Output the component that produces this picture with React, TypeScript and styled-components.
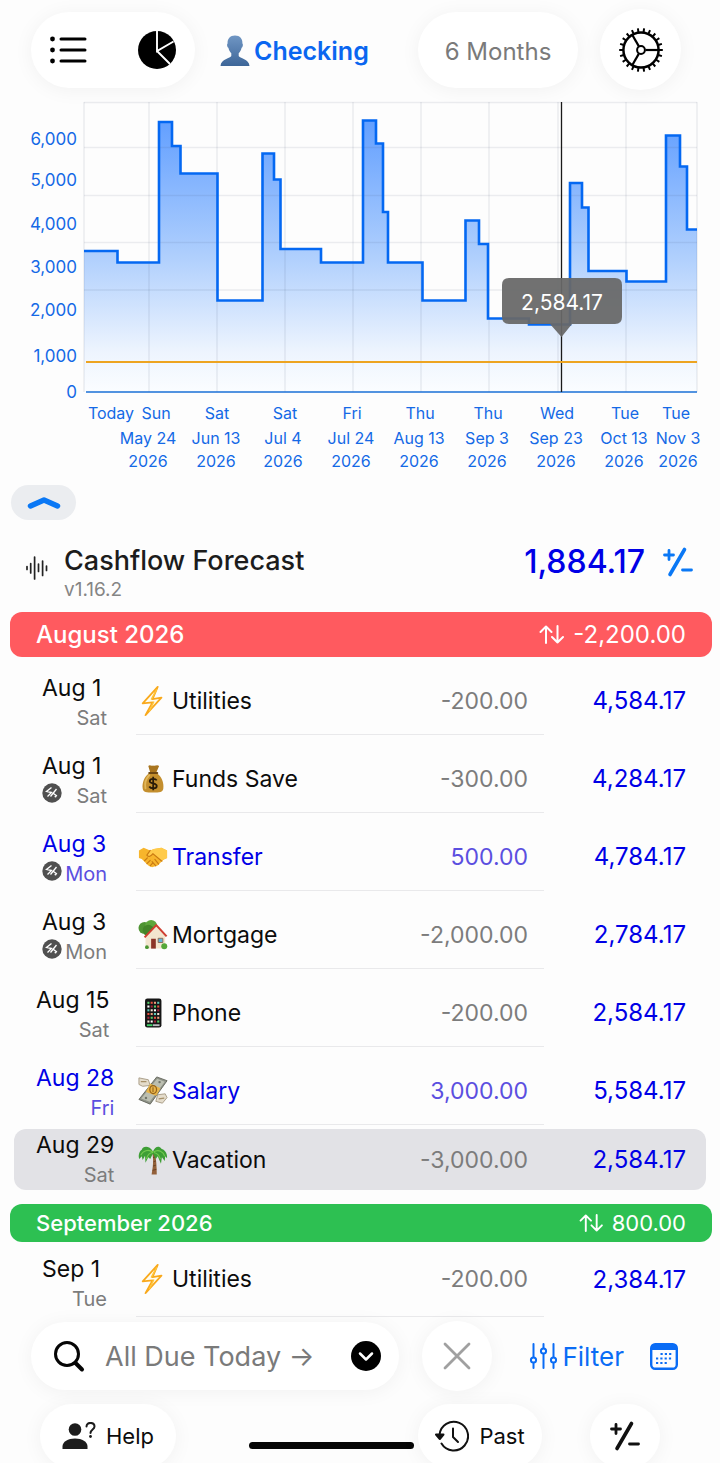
import React, { useState } from "react";
import styled, { createGlobalStyle } from "styled-components";

const blue = "#0a6cf5";
const ink = "#0000e6";

const GlobalStyle = createGlobalStyle`
  * { box-sizing: border-box; }
  body { margin: 0; background: #fdfdfd; color: #0c0c0c; font-family: Inter, "Liberation Sans", sans-serif; }
  button, input { font: inherit; color: inherit; border: 0; background: none; padding: 0; margin: 0; }
  button { cursor: pointer; }
  svg { display: block; flex: none; }
`;

const Screen = styled.main`
  width: 100%;
  overflow: hidden;
`;

const TopBar = styled.header`
  display: flex;
  align-items: center;
  height: 96px;
  padding: 6px 39px 3px 31px;
`;

const Surface = styled.div`
  display: flex;
  align-items: center;
  justify-content: center;
  flex: none;
  background: #fff;
  border-radius: 41px;
  box-shadow: 0 2px 20px rgba(0, 0, 0, 0.05);
`;

const ViewSwitch = styled(Surface)`
  width: 164px;
  height: 76px;
  justify-content: space-between;
  padding: 0 19px 0 18px;
`;

const IconButton = styled.button`
  display: flex;
  align-items: center;
  justify-content: center;
`;

const AccountButton = styled.button`
  display: flex;
  align-items: center;
  gap: 4px;
  margin-left: 25px;
  margin-right: auto;
  padding-top: 3px;
  color: #0a66f0;
  font-size: 25px;
  font-weight: 600;
`;

const PeriodButton = styled(Surface).attrs({ as: "button" })`
  width: 160px;
  height: 76px;
  margin-right: 22px;
  padding-top: 3px;
  color: #7a7a7a;
  font-size: 24px;
`;

const RoundButton = styled(Surface).attrs({ as: "button" })<{ $size: number }>`
  width: ${(p) => p.$size}px;
  height: ${(p) => p.$size}px;
`;

const Chart = styled.svg`
  width: 100%;
  height: auto;
  font-family: Inter, "Liberation Sans", sans-serif;
`;

const CollapseButton = styled.button`
  display: flex;
  align-items: center;
  justify-content: center;
  width: 65px;
  height: 35px;
  margin: 9px 0 0 11px;
  border-radius: 18px;
  background: #ebedf0;
`;

const Summary = styled.section`
  display: flex;
  align-items: flex-start;
  padding: 24px 27px 10px 25px;
`;

const WaveBox = styled.span`
  padding-top: 11px;
  margin-right: 15px;
`;

const AppTitle = styled.h1`
  margin: 0;
  font-size: 27px;
  line-height: 34px;
  font-weight: 500;
  color: #1c1c1c;
`;

const Version = styled.p`
  margin: 0;
  font-size: 19px;
  line-height: 24px;
  color: #858585;
`;

const Total = styled.div`
  display: flex;
  align-items: center;
  gap: 18px;
  margin-left: auto;
  font-size: 32px;
  line-height: 36px;
  font-weight: 500;
  color: ${ink};
`;

const Ledger = styled.table`
  display: block;
  font-size: 23px;
`;

const Group = styled.tbody`
  display: block;
`;

const MonthRow = styled.tr<{ $color: string; $compact?: boolean }>`
  display: flex;
  align-items: center;
  justify-content: space-between;
  height: ${(p) => (p.$compact ? 38 : 45)}px;
  margin: 0 8px 0 10px;
  padding: 0 26px;
  border-radius: 12px;
  background: ${(p) => p.$color};
  color: #fff;
  font-size: ${(p) => (p.$compact ? 22 : 24)}px;
`;

const MonthName = styled.th`
  padding: 0;
  font-weight: 500;
`;

const MonthNet = styled.td`
  display: flex;
  align-items: center;
  gap: 9px;
  padding: 0;
`;

type RowKind = "regular" | "selected" | "compact";
const rowHeight = { regular: 78, selected: 61, compact: 75 };
const rowTop = { regular: 10, selected: 0, compact: 0 };
const dateTop = { regular: 15, selected: 1, compact: 9 };

const EntryRow = styled.tr<{ $kind: RowKind }>`
  --inset: ${(p) => (p.$kind === "selected" ? 14 : 0)}px;
  --top: ${(p) => rowTop[p.$kind]}px;
  --date-top: ${(p) => dateTop[p.$kind]}px;
  --rule: ${(p) => (p.$kind === "selected" ? "transparent" : "#e9e9eb")};
  display: grid;
  grid-template-columns: calc(136px - var(--inset)) 1fr 140px calc(176px - var(--inset));
  height: ${(p) => rowHeight[p.$kind]}px;
  margin: ${(p) => (p.$kind === "selected" ? "4px 14px 14px" : "0")};
  border-radius: 12px;
  background: ${(p) => (p.$kind === "selected" ? "#e2e2e6" : "transparent")};
`;

const Cell = styled.td`
  display: flex;
  align-items: center;
  padding: var(--top) 0 0;
  border-bottom: 1px solid transparent;
`;

const DateCell = styled(Cell)<{ $wide: boolean }>`
  padding-top: var(--date-top);
  padding-left: calc(${(p) => (p.$wide ? 36 : 42)}px - var(--inset));
`;

const DateBlock = styled.div`
  min-width: 65px;
`;

const Day = styled.div<{ $income?: boolean }>`
  font-size: 23px;
  line-height: 30px;
  white-space: nowrap;
  color: ${(p) => (p.$income ? ink : "#0c0c0c")};
`;

const Weekday = styled.div<{ $income?: boolean }>`
  display: flex;
  justify-content: space-between;
  font-size: 20px;
  line-height: 30px;
  color: ${(p) => (p.$income ? "#5b4fe0" : "#7c7c7c")};

  svg { margin-top: 2px; }
  span { margin-left: auto; }
`;

const NameCell = styled(Cell)<{ $income?: boolean }>`
  gap: 4px;
  padding-left: 2px;
  border-bottom-color: var(--rule);
  color: ${(p) => (p.$income ? ink : "#0c0c0c")};
`;

const AmountCell = styled(Cell)<{ $income?: boolean }>`
  justify-content: flex-end;
  padding-right: 16px;
  border-bottom-color: var(--rule);
  color: ${(p) => (p.$income ? "#5b4fe0" : "#7c7c7c")};
`;

const BalanceCell = styled(Cell)`
  justify-content: flex-end;
  padding-right: calc(34px - var(--inset));
  font-size: 24px;
  color: ${ink};
`;

const ActionBar = styled.div`
  display: flex;
  align-items: center;
  padding: 4px 42px 0 31px;
`;

const SearchField = styled(Surface)`
  flex: 1 1 0;
  min-width: 0;
  height: 68px;
  padding: 0 18px 0 21px;
  margin-right: 23px;

  input {
    flex: 1 1 0;
    min-width: 0;
    margin-left: 19px;
    outline: 0;
    font-size: 27px;
  }
  input::placeholder { color: #7a7a7a; opacity: 1; }
`;

const FilterButton = styled.button`
  display: flex;
  align-items: center;
  gap: 5px;
  margin: 0 26px 0 37px;
  color: ${blue};
  font-size: 26px;
`;

const BottomNav = styled.nav`
  display: flex;
  align-items: flex-start;
  height: 72px;
  padding: 13px 60px 0 40px;
`;

const NavButton = styled(Surface).attrs({ as: "button" })<{ $width: number }>`
  width: ${(p) => p.$width}px;
  height: 64px;
  gap: 10px;
  font-size: 22px;
`;

const HomeIndicator = styled.span`
  width: 165px;
  height: 7px;
  margin: 38px 4px 0 auto;
  border-radius: 4px;
  background: #050505;
`;

const PlusButton = styled(RoundButton)`
  height: 64px;
  margin-left: 48px;
`;

const ListIcon = () => (
  <svg width="38" height="30" viewBox="0 0 38 30" stroke="#000" strokeWidth="3" strokeLinecap="round">
    {[4, 15, 26].map((y) => (
      <g key={y}>
        <circle cx="3.5" cy={y} r="2.4" fill="#000" stroke="none" />
        <path d={`M12 ${y}H36`} />
      </g>
    ))}
  </svg>
);

const PieIcon = () => (
  <svg width="38" height="38" viewBox="0 0 38 38">
    <circle cx="19" cy="19" r="19" />
    <path d="M19 0V20L35.5 10.5M19 20L32 33" fill="none" stroke="#fff" strokeWidth="1.9" />
  </svg>
);

const PersonIcon = () => (
  <svg width="30" height="32" viewBox="0 0 30 32">
    <defs>
      <linearGradient id="person" x1="0" y1="0" x2="0" y2="1">
        <stop offset="0" stopColor="#7096c4" />
        <stop offset="1" stopColor="#3d6698" />
      </linearGradient>
    </defs>
    <path
      fill="url(#person)"
      d="M15 0.5C10 .5 7.3 4 7.6 8.5c-.8.4-.7 3.500.8 4.300.5 2.500 1.700 4.300 2.900 5.500v2.700C10.500 23.500 1 23.500.500 31h29c-.5-7.500-10-7.500-10.800-10v-2.700c1.200-1.200 2.400-3 2.900-5.500 1.500-.8 1.600-3.900.8-4.300C22.700 4 20 .5 15 .5Z"
    />
  </svg>
);

const GearIcon = () => (
  <svg width="44" height="44" viewBox="-22 -22 44 44" fill="none" stroke="#000">
    <circle r="17.6" strokeWidth="2.5" />
    {Array.from({ length: 22 }, (_, i) => (
      <path key={i} d="M18 0H21.800" strokeWidth="2" transform={`rotate(${(i * 360) / 22})`} />
    ))}
    <circle r="3.900" strokeWidth="2" />
    {[0, 120, 240].map((a) => (
      <path key={a} d="M4.500 0H17" strokeWidth="2.200" transform={`rotate(${a})`} />
    ))}
  </svg>
);

const PlusMinusIcon = ({ color }: { color: string }) => (
  <svg width="30" height="30" viewBox="0 0 30 30" fill="none" stroke={color} strokeLinecap="round">
    <path d="M21.500 2.500L7 27.500" strokeWidth="3.600" />
    <path d="M1.500 8H10.500M6 3.500V12.500M19.500 23H28.500" strokeWidth="2.800" />
  </svg>
);

const WaveIcon = () => (
  <svg width="24" height="26" viewBox="0 0 24 26" stroke="#222" strokeWidth="1.700" strokeLinecap="round">
    <path d="M2 11.500V14.500M5.700 8.500V18M9.600 2V24M13.500 9V16.500M17.600 6V20.500M21.500 11V15.500" />
  </svg>
);

const SwapIcon = ({ size }: { size: number }) => (
  <svg width={size} height={size - 6} viewBox="0 0 25 19" fill="none" stroke="#fff" strokeWidth="2" strokeLinecap="round" strokeLinejoin="round">
    <path d="M7 18V1.500M1.500 7L7 1.500L12.500 7M18.500 1V17.500M13 12L18.500 17.500L24 12" />
  </svg>
);

const AutoIcon = () => (
  <svg width="20" height="20" viewBox="0 0 20 20" role="img" aria-label="Automatic">
    <circle cx="10" cy="10" r="9.700" fill="#505050" />
    <path d="M9.500 4.500L4.500 8.500L9.500 9.500L5.500 13.500M14.500 6L8.500 13.500M11.500 10.500L15 13" fill="none" stroke="#fff" strokeWidth="1.300" />
    <circle cx="13.500" cy="13.500" r="1" fill="#fff" />
  </svg>
);

const glyphs: Record<string, React.ReactNode> = {
  bolt: (
    <>
      <path d="M21 1L5 18.500L15.500 17.500L8 31L25 12.500L15.500 14Z" fill="#fffdf0" stroke="#f9a91c" strokeWidth="1.900" strokeLinejoin="round" />
      <path d="M20 3.500L14 14.500M12 27L17 16.500" stroke="#ffc53a" strokeWidth="1.500" />
    </>
  ),
  bag: (
    <>
      <path d="M11 2C13 0 14 3 16 1.500C18 3 20 0 22.500 2L19.500 9H13Z" fill="#a9751f" />
      <path d="M12 9.500C7 13 4 20 5 26C5.500 30 9 30.500 16 30.500S26.500 30 27 26C28 20 25 13 20 9.500Z" fill="#c48f2e" />
      <path d="M12 12C8 16 7 21 8 26" stroke="#e2b75a" strokeWidth="2" fill="none" strokeLinecap="round" />
      <path d="M12 9.500H20.500" stroke="#6d4713" strokeWidth="2.200" strokeLinecap="round" />
      <path d="M20 17.500C18.500 15 12.500 15.300 12.500 18.300C12.500 21.500 20 20 20 23.500C20 26.800 13.500 26.800 12 24M16.200 13.700V28" stroke="#2b1c08" strokeWidth="1.900" fill="none" />
    </>
  ),
  hands: (
    <>
      <path d="M1 9L6 6L13 9L17 7.500L25 6L31 9V17L27 19L21 25L15 27L11 25L4 18L1 17Z" fill="#f7b52c" />
      <path d="M13 9L9.500 14C11 16.500 14 15 16 12.500L25.500 20.500L27 19L31 17V9L25 6L17 7.500Z" fill="#ffcb4a" />
      <path d="M13 9L9.500 14C11 16.500 14 15 16 12.500L25.500 20.500M7 20L10 17M9.500 23L13 19.500M13 25.500L16 22M18 18.500L22 23.500M15 21L19 25.500" stroke="#c97a12" strokeWidth="1.200" fill="none" strokeLinecap="round" />
    </>
  ),
  house: (
    <>
      <path d="M9 16H12V30H9Z" fill="#7b4a25" />
      <circle cx="7" cy="8.500" r="6.500" fill="#4e9432" />
      <circle cx="14" cy="6.500" r="6.500" fill="#5da63b" />
      <circle cx="11" cy="11" r="6" fill="#438529" />
      <path d="M8 17L20 6L29 17V30.500H8Z" fill="#f3e6cf" />
      <path d="M7 18.500L19.500 5.500L30.500 17.500" stroke="#cf3f31" strokeWidth="2.200" fill="none" strokeLinejoin="round" />
      <path d="M14 20H19V30.500H14Z" fill="#8c3427" />
      <path d="M21.500 19.500H26.500V24H21.500Z" fill="#63b4da" stroke="#8a6a55" strokeWidth="1" />
      <circle cx="28" cy="28" r="3.200" fill="#55a83a" />
      <circle cx="9.500" cy="29" r="2" fill="#4a9632" />
    </>
  ),
  phone: (
    <>
      <rect x="7.500" y="0.500" width="17.500" height="31" rx="2.500" fill="#161616" />
      {[4, 8, 12, 16, 20, 24].map((y, r) =>
        [10, 13.500, 17, 20.500].map((x, c) => (
          <rect key={`${x}-${y}`} x={x} y={y} width="2.200" height="2.200" fill={["#58d06a", "#f2e3d3", "#e8523f", "#fff", "#ef9d7c", "#a3233a", "#5fc7b7"][(r * 3 + c * 2) % 7]} />
        ))
      )}
      <rect x="9.500" y="28" width="6" height="2" fill="#3ecf66" />
      <rect x="16" y="28" width="7" height="2" fill="#b9bcc0" />
    </>
  ),
  cash: (
    <>
      <path d="M1 2L11 4L13 10L5 11L1 9ZM31 23L26 29L19 27L21 20L29 19Z" fill="#e4dccb" stroke="#a89c86" strokeWidth="1" />
      <path d="M3 6H9M22 24.500L28 23.500" stroke="#a58f68" strokeWidth="1.300" />
      <path d="M20 1L31 5L13 30L1 25Z" fill="#8f9388" stroke="#66695f" strokeWidth="1" />
      <path d="M20.500 3L28.500 6L12.500 27.500L3.500 24Z" fill="#bcbfb1" />
      <path d="M13 8L24 13L19.500 21L8.500 17Z" fill="#e8b54a" />
      <ellipse cx="16.200" cy="14.500" rx="3.600" ry="4.300" fill="none" stroke="#94621a" strokeWidth="1.300" />
      <path d="M16 12V17" stroke="#94621a" strokeWidth="1.200" />
      <circle cx="23" cy="6.500" r="1.300" fill="#72766b" />
      <circle cx="8.500" cy="23.500" r="1.300" fill="#72766b" />
    </>
  ),
  palm: (
    <>
      <path d="M15 8C17 15 16 24 14.500 31.500H20C20 24 19.500 15 18 8Z" fill="#93603a" />
      <path d="M16 13.500L18.500 12.500M16.500 18L19 17M16 22.500L19 21.500M15.500 27L19.500 26" stroke="#6b4023" strokeWidth="1" />
      <path d="M16 7C12 0 5 1 4 5C1 7 0 12 1.500 15L4 12L5 16L7.500 11.500L8 19L11 13L13 15L16 9L19 15L21 12L24.500 20L25.500 13L28.500 17L29 12L31 14C31.500 8 28 5 25 4C22 0 18 2 16 7Z" fill="#3d9e35" />
      <path d="M16 7.500C11 4 5 6 3 11M16.500 7.500C22 4 27 7 28.500 12M16 8C12 8 10 11 9 15M17 8C21 9 23 12 24 15" stroke="#72c94e" strokeWidth="1.200" fill="none" />
    </>
  ),
};

const Glyph = ({ name }: { name: string }) => (
  <svg width="30" height="30" viewBox="0 0 32 32" aria-hidden="true">
    {glyphs[name]}
  </svg>
);

const yTicks: [string, number][] = [["6,000", 139], ["5,000", 180], ["4,000", 224], ["3,000", 267], ["2,000", 310], ["1,000", 356], ["0", 392]];
const xTicks: [string, number, string, string, number][] = [
  ["Sun", 156, "May 24", "2026", 148],
  ["Sat", 217, "Jun 13", "2026", 216],
  ["Sat", 285, "Jul 4", "2026", 283],
  ["Fri", 352, "Jul 24", "2026", 351],
  ["Thu", 420, "Aug 13", "2026", 419],
  ["Thu", 488, "Sep 3", "2026", 487],
  ["Wed", 557, "Sep 23", "2026", 556],
  ["Tue", 625, "Oct 13", "2026", 624],
  ["Tue", 676, "Nov 3", "2026", 678],
];
const balanceLine =
  "M84 251H117.500V262.500H159V122H172V146H180.500V173.500H217.500V300.500H262.500V153.500H274V179.500H280.500V249H321V262.500H363V120.500H376V143.500H383V212H388V262.500H422.500V300.500H465.500V220.500H479V244H488V318.500H529V324.500H570V183H582V207.500H588.500V271H626.500V281.500H666V135.500H680V166.500H687V229.500H697";

const BalanceChart = () => (
  <Chart viewBox="0 96 720 380" role="img" aria-label="Balance forecast">
    <defs>
      <linearGradient id="area" gradientUnits="userSpaceOnUse" x1="0" y1="120" x2="0" y2="392">
        <stop offset="0" stopColor="#629fff" />
        <stop offset="0.500" stopColor="#afcffd" />
        <stop offset="0.850" stopColor="#edf4fe" />
        <stop offset="1" stopColor="#fbfdff" />
      </linearGradient>
    </defs>
    <path d={`${balanceLine}V392H84Z`} fill="url(#area)" />
    <g stroke="#3c4660" strokeOpacity="0.090" strokeWidth="1.500">
      {[102.500, 147.500, 195.500, 242.500, 290].map((y) => (
        <path key={y} d={`M84 ${y}H697`} />
      ))}
      {[84, 149, 217, 285, 353, 421, 489, 558, 626, 697].map((x) => (
        <path key={x} d={`M${x} 102V392`} />
      ))}
    </g>
    <path d={balanceLine} fill="none" stroke="#0468f2" strokeWidth="2.600" />
    <path d="M86 392H697" stroke="#1a6fd6" strokeWidth="1.600" />
    <path d="M561.500 102V392" stroke="#1a1a1a" strokeWidth="1.300" />
    <path d="M86 362H697" stroke="#eda421" strokeWidth="2.200" />
    <path
      d="M509 278H615Q622 278 622 285V317Q622 324 615 324H572L561.500 337L550 324H509Q502 324 502 317V285Q502 278 509 278Z"
      fill="#686868"
      fillOpacity="0.940"
    />
    <text x="562" y="310" fontSize="21" fill="#fff" textAnchor="middle">2,584.17</text>
    <g fontSize="17" fill="#1469e6" textAnchor="end">
      {yTicks.map(([label, y]) => (
        <text key={label} x="77" y={y + 6}>{label}</text>
      ))}
    </g>
    <g fontSize="16" fill="#1469e6" textAnchor="middle">
      <text x="111" y="419">Today</text>
      {xTicks.map(([day, dayX, date, year, x]) => (
        <g key={date}>
          <text x={dayX} y="419">{day}</text>
          <text x={x} y="444">{date}</text>
          <text x={x} y="467">{year}</text>
        </g>
      ))}
    </g>
  </Chart>
);

type Entry = { day: string; week: string; auto?: boolean; icon: string; name: string; amount: string; balance: string; income?: boolean; kind?: RowKind };

const august: Entry[] = [
  { day: "Aug 1", week: "Sat", icon: "bolt", name: "Utilities", amount: "-200.00", balance: "4,584.17" },
  { day: "Aug 1", week: "Sat", auto: true, icon: "bag", name: "Funds Save", amount: "-300.00", balance: "4,284.17" },
  { day: "Aug 3", week: "Mon", auto: true, icon: "hands", name: "Transfer", amount: "500.00", balance: "4,784.17", income: true },
  { day: "Aug 3", week: "Mon", auto: true, icon: "house", name: "Mortgage", amount: "-2,000.00", balance: "2,784.17" },
  { day: "Aug 15", week: "Sat", icon: "phone", name: "Phone", amount: "-200.00", balance: "2,584.17" },
  { day: "Aug 28", week: "Fri", icon: "cash", name: "Salary", amount: "3,000.00", balance: "5,584.17", income: true },
  { day: "Aug 29", week: "Sat", icon: "palm", name: "Vacation", amount: "-3,000.00", balance: "2,584.17", kind: "selected" },
];
const september: Entry[] = [
  { day: "Sep 1", week: "Tue", icon: "bolt", name: "Utilities", amount: "-200.00", balance: "2,384.17", kind: "compact" },
];

const LedgerEntry = ({ e }: { e: Entry }) => (
  <EntryRow $kind={e.kind ?? "regular"}>
    <DateCell $wide={e.day.length > 5}>
      <DateBlock>
        <Day $income={e.income}>{e.day}</Day>
        <Weekday $income={e.income}>
          {e.auto && <AutoIcon />}
          <span>{e.week}</span>
        </Weekday>
      </DateBlock>
    </DateCell>
    <NameCell $income={e.income}>
      <Glyph name={e.icon} />
      {e.name}
    </NameCell>
    <AmountCell $income={e.income}>{e.amount}</AmountCell>
    <BalanceCell>{e.balance}</BalanceCell>
  </EntryRow>
);

export default function App() {
  const [query, setQuery] = useState("");
  return (
    <Screen>
      <GlobalStyle />
      <TopBar>
        <ViewSwitch>
          <IconButton aria-label="List"><ListIcon /></IconButton>
          <IconButton aria-label="Breakdown"><PieIcon /></IconButton>
        </ViewSwitch>
        <AccountButton><PersonIcon />Checking</AccountButton>
        <PeriodButton>6 Months</PeriodButton>
        <RoundButton $size={81} aria-label="Settings"><GearIcon /></RoundButton>
      </TopBar>

      <BalanceChart />

      <CollapseButton aria-label="Collapse chart">
        <svg width="34" height="14" viewBox="0 0 34 14" fill="none" stroke="#0a78f5" strokeWidth="5.500" strokeLinecap="round" strokeLinejoin="round">
          <path d="M3.500 10L17 4L30.500 10" />
        </svg>
      </CollapseButton>

      <Summary>
        <WaveBox><WaveIcon /></WaveBox>
        <div>
          <AppTitle>Cashflow Forecast</AppTitle>
          <Version>v1.16.2</Version>
        </div>
        <Total>
          1,884.17
          <IconButton aria-label="Adjust balance"><PlusMinusIcon color="#0a78f5" /></IconButton>
        </Total>
      </Summary>

      <Ledger>
        <Group>
          <MonthRow $color="#ff5a5f">
            <MonthName scope="rowgroup">August 2026</MonthName>
            <MonthNet><SwapIcon size={25} />-2,200.00</MonthNet>
          </MonthRow>
          {august.map((e) => <LedgerEntry key={e.name} e={e} />)}
        </Group>
        <Group>
          <MonthRow $color="#2dc052" $compact>
            <MonthName scope="rowgroup">September 2026</MonthName>
            <MonthNet><SwapIcon size={24} />800.00</MonthNet>
          </MonthRow>
          {september.map((e) => <LedgerEntry key={e.name} e={e} />)}
        </Group>
      </Ledger>

      <ActionBar>
        <SearchField>
          <svg width="34" height="34" viewBox="0 0 34 34" fill="none" stroke="#050505" strokeLinecap="round">
            <circle cx="15" cy="15" r="11.500" strokeWidth="3" />
            <path d="M23.500 24L30 30.500" strokeWidth="4" />
          </svg>
          <input aria-label="Search" placeholder="All Due Today →" value={query} onChange={(ev) => setQuery(ev.target.value)} />
          <IconButton aria-label="More searches">
            <svg width="30" height="30" viewBox="0 0 30 30">
              <circle cx="15" cy="15" r="15" />
              <path d="M9 12.500L15 18.500L21 12.500" fill="none" stroke="#fff" strokeWidth="2.500" strokeLinecap="round" strokeLinejoin="round" />
            </svg>
          </IconButton>
        </SearchField>
        <RoundButton $size={70} aria-label="Clear">
          <svg width="28" height="28" viewBox="0 0 28 28" stroke="#a0a0a0" strokeWidth="2.800" strokeLinecap="round">
            <path d="M2 2L26 26M26 2L2 26" />
          </svg>
        </RoundButton>
        <FilterButton>
          <svg width="28" height="26" viewBox="0 0 28 26" fill="none" stroke={blue} strokeWidth="2" strokeLinecap="round">
            <path d="M4.500 1V14M4.500 20V25M14.500 1V5M14.500 11V25M24.500 1V14M24.500 20V25" />
            <circle cx="4.500" cy="17" r="2.600" />
            <circle cx="14.500" cy="8" r="2.600" />
            <circle cx="24.500" cy="17" r="2.600" />
          </svg>
          Filter
        </FilterButton>
        <IconButton aria-label="Calendar">
          <svg width="28" height="27" viewBox="0 0 28 27">
            <rect x="1.200" y="1.200" width="25.600" height="24.600" rx="4" fill="none" stroke={blue} strokeWidth="2.400" />
            <path d="M1 7V4.500Q1 1 5 1H23Q27 1 27 4.500V7Z" fill={blue} />
            <path d="M10.500 11H23M6 15.500H23M6 20H18" stroke={blue} strokeWidth="2.200" strokeDasharray="2.200 2.100" />
          </svg>
        </IconButton>
      </ActionBar>

      <BottomNav>
        <NavButton $width={136}>
          <svg width="34" height="28" viewBox="0 0 34 28" fill="none">
            <circle cx="13" cy="7.500" r="6.300" fill="#1c1c1c" />
            <path d="M.500 27V24.500C.500 19.500 6 16.500 13 16.500S25.500 19.500 25.500 24.500V27Z" fill="#1c1c1c" />
            <path d="M24.500 4.500C24.500-.300 32.500-.300 32.500 4.500C32.500 7.500 28.500 7.500 28.500 11" stroke="#1c1c1c" strokeWidth="2" strokeLinecap="round" />
            <circle cx="28.500" cy="14.500" r="1.400" fill="#1c1c1c" />
          </svg>
          Help
        </NavButton>
        <HomeIndicator />
        <NavButton $width={124}>
          <svg width="34" height="32" viewBox="0 0 34 32" fill="none" stroke="#111" strokeWidth="2" strokeLinecap="round" strokeLinejoin="round">
            <path d="M4.500 15A14.300 14.300 0 1 1 6.500 23.500" />
            <path d="M1 14.500H8.500L4.800 19Z" fill="#111" />
            <path d="M18 8.500V17L23 22" />
          </svg>
          Past
        </NavButton>
        <PlusButton $size={70} aria-label="Add transaction"><PlusMinusIcon color="#111" /></PlusButton>
      </BottomNav>
    </Screen>
  );
}
